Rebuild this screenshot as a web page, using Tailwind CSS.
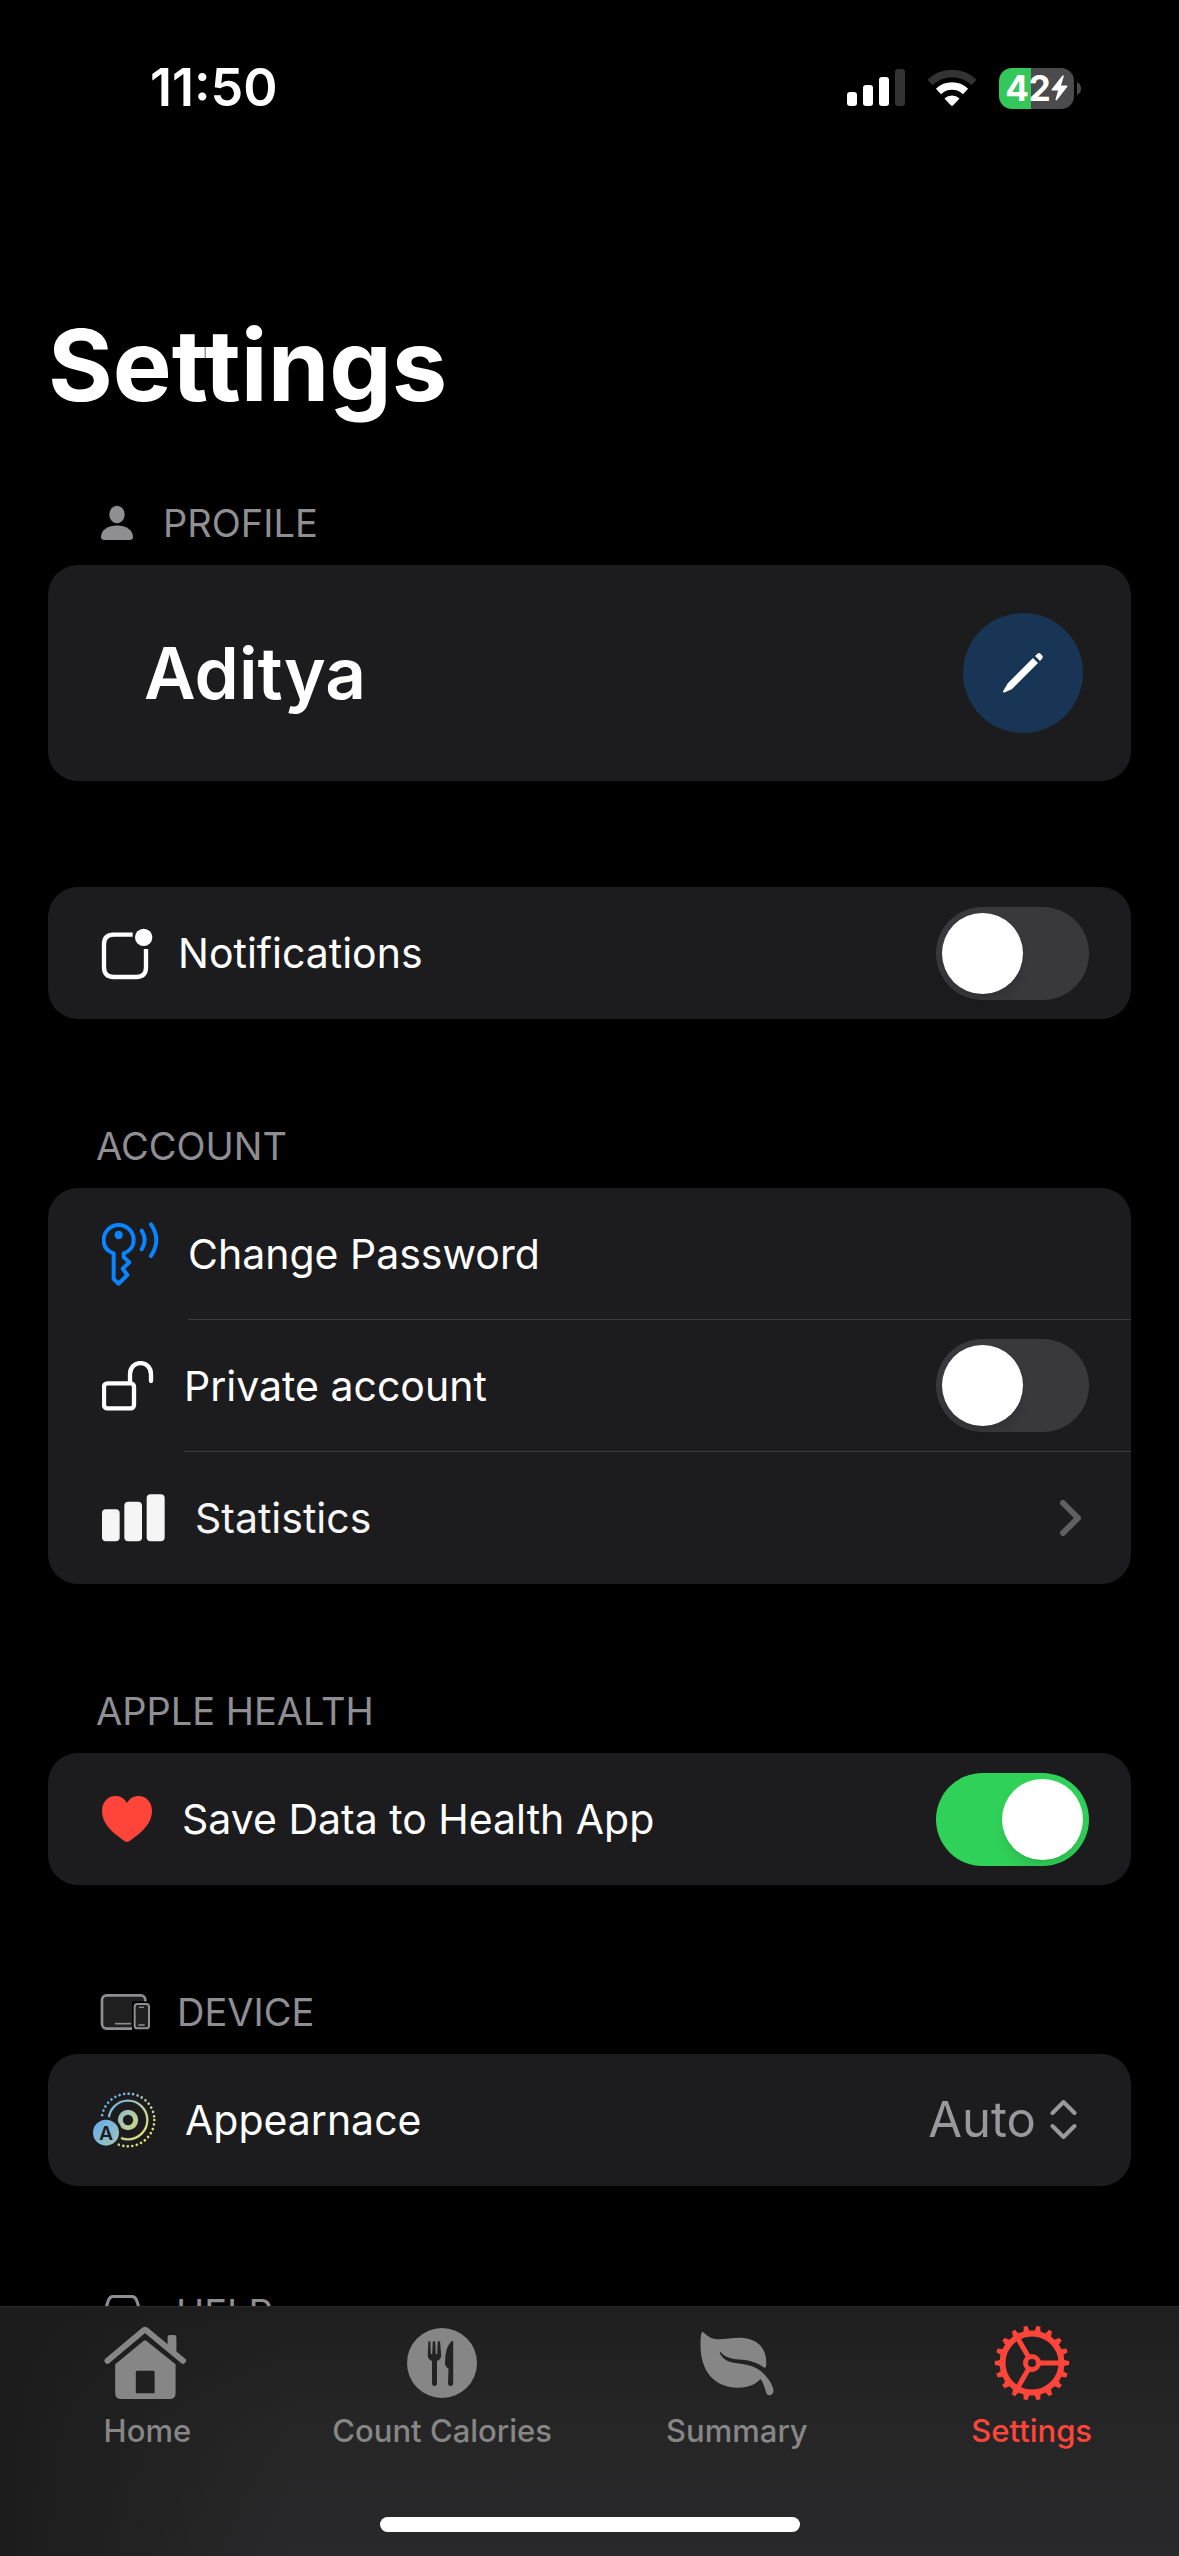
<!DOCTYPE html>
<html lang="en">
<head>
<meta charset="utf-8">
<meta name="viewport" content="width=device-width, initial-scale=1">
<title>Settings</title>
<script src="https://cdn.jsdelivr.net/npm/@tailwindcss/browser@4"></script>
</head>
<body class="min-h-screen bg-black font-[Inter,sans-serif] text-white">

<!-- Status bar -->
<header class="flex h-[176px] items-center justify-between pr-[98px] pl-[150px]">
  <time class="text-[52px] leading-[60px] font-semibold">11:50</time>
  <div class="flex items-center gap-[22px]">
    <svg class="h-[38px] w-[58px]" viewBox="0 0 58 38" fill="#fff" aria-label="Signal">
      <rect x="0" y="23" width="10" height="14" rx="3"/><rect x="16" y="16" width="10" height="21" rx="3"/><rect x="32" y="8" width="10" height="29" rx="3"/><rect x="48" y="0" width="10" height="37" rx="3" fill="#333"/>
    </svg>
    <svg class="h-[38px] w-[50px]" viewBox="0 0 50 38" aria-label="Wi-Fi">
      <path d="M3 13.500 A31.500 31.500 0 0 1 47 13.500" fill="none" stroke="#333" stroke-width="7.500"/>
      <path d="M11.500 22.500 A19.500 19.500 0 0 1 38.500 22.500" fill="none" stroke="#fff" stroke-width="7.500"/>
      <path d="M17.500 29.500 A11 11 0 0 1 32.500 29.500 L26.200 36.300 Q25 37.500 23.800 36.300Z" fill="#fff"/>
    </svg>
    <div class="flex items-center gap-[3px]" aria-label="Battery 42 percent, charging">
      <div class="flex h-[41px] w-[75px] items-center justify-center rounded-[13px] bg-linear-to-r from-[#34c759] from-43% to-[#4b4b4d] to-43%">
        <span class="text-[35px] leading-[40px] font-bold">42</span>
        <svg class="h-[26px] w-[17px]" viewBox="0 0 17 26" fill="#fff"><path d="M11.500 .5 L.7 14.200 Q0 15.500 1.500 15.500 H7 L4.500 24.500 Q4.800 26 6 25 L16.300 11.800 Q17 10.500 15.500 10.500 H10 L12.700 1.500 Q12.700 -.3 11.500 .5Z"/></svg>
      </div>
      <svg class="h-[13px] w-[4px]" viewBox="0 0 4 13" fill="#4b4b4d"><path d="M0 0 Q4 2 4 6.500 T0 13Z"/></svg>
    </div>
  </div>
</header>

<main class="px-12">
  <h1 class="mt-[129px] text-[99px] leading-[120px] font-bold">Settings</h1>

  <section class="mt-[74px]">
    <h2 class="flex items-center gap-[27px] pb-[18px] pl-12 text-[38px] leading-[48px] text-[#8e8e93]">
      <svg class="h-9 w-10" viewBox="0 0 40 36" fill="#8e8e93"><ellipse cx="21" cy="9.500" rx="7.700" ry="8.800"/><path d="M5 32 C5 25 12 20.500 21 20.500 S37 25 37 32 Q37 35 33.500 35 H8.500 Q5 35 5 32Z"/></svg>
      PROFILE
    </h2>
    <div class="flex h-[216px] items-center justify-between rounded-[30px] bg-[#1c1c1e] pr-12 pl-24">
      <p class="text-[71px] leading-[88px] font-semibold">Aditya</p>
      <button type="button" aria-label="Edit profile" class="flex size-[120px] items-center justify-center rounded-full bg-[#183555]">
        <svg class="size-[42px]" viewBox="0 0 42 42" fill="#fff"><path d="M31 6 L36 11 L10.500 36.500 Q9.500 37.500 8 38 L2.500 40.500 Q.5 41 1.200 39 L4.500 33.500 Q5 32 6 31Z"/><path d="M33 4 L35.500 1.700 Q37 .5 38.500 1.800 L40.200 3.500 Q41.500 5 40.200 6.500 L38 9Z"/></svg>
      </button>
    </div>
  </section>

  <section class="mt-[106px] rounded-[30px] bg-[#1c1c1e]">
    <div class="flex h-[132px] items-center gap-[26px] pr-[42px] pl-[54px]">
      <svg class="h-[66px] w-[50px] shrink-0 overflow-visible" viewBox="66 63 150 198" fill="none" stroke="#fff" stroke-width="13"><path d="M158 107 H101 Q72 107 72 136 V205 Q72 234 101 234 H169 Q198 234 198 205 V150" /><circle cx="191" cy="115" r="26" fill="#fff" stroke="none"/></svg>
      <label for="notifications" class="flex-1 text-[41px] leading-[50px]">Notifications</label>
      <input id="notifications" type="checkbox" role="switch" class="h-[93px] w-[153px] appearance-none rounded-full bg-[#39393d] p-[6px] before:block before:size-[81px] before:rounded-full before:bg-white before:shadow-lg checked:bg-[#30d158] checked:before:ml-[60px]">
    </div>
  </section>

  <section class="mt-[103px]">
    <h2 class="pb-[18px] pl-12 text-[38px] leading-[48px] text-[#8e8e93]">ACCOUNT</h2>
    <div class="rounded-[30px] bg-[#1c1c1e]">
      <div class="flex h-[132px] items-center gap-[26px] pl-[54px]">
        <svg class="h-[64px] w-[60px] shrink-0" viewBox="66 67 180 192" fill="none" stroke="#0a84ff" stroke-width="12" stroke-linecap="round" stroke-linejoin="round"><path d="M101 161 C82 155 71 140 71 121 A45 45 0 0 1 161 121 C161 140 149 155 131 161 V172 L148 188 L128 207 L142 226 L116 252 L101 238Z"/><circle cx="116" cy="106" r="12.500" fill="#0a84ff" stroke="none"/><path d="M185 93 Q203 121 185 149 M213 74 Q245 121 213 169"/></svg>
        <button type="button" class="h-full flex-1 border-b border-[#3a3a3c] text-left text-[41px] leading-[50px]">Change Password</button>
      </div>
      <div class="flex h-[132px] items-center gap-[26px] pl-[54px]">
        <svg class="h-[50px] w-[56px] shrink-0" viewBox="66 485 168 150" fill="none" stroke="#fff" stroke-width="13" stroke-linecap="round"><rect x="72" y="552" width="90" height="75" rx="10"/><path d="M150 550 V525 C150 480 213 480 213 525 V545"/></svg>
        <div class="flex h-full flex-1 items-center justify-between border-b border-[#3a3a3c] pr-[42px]">
          <label for="private" class="text-[41px] leading-[50px]">Private account</label>
          <input id="private" type="checkbox" role="switch" class="h-[93px] w-[153px] appearance-none rounded-full bg-[#39393d] p-[6px] before:block before:size-[81px] before:rounded-full before:bg-white before:shadow-lg checked:bg-[#30d158] checked:before:ml-[60px]">
        </div>
      </div>
      <a href="#statistics" class="flex h-[132px] items-center gap-[26px] pr-[50px] pl-[54px] text-[#f5f5f5]">
        <svg class="h-[48px] w-[67px] shrink-0" viewBox="66 884 201 144" fill="#f5f5f5"><rect x="66" y="930" width="53" height="96" rx="12"/><rect x="133" y="907" width="53" height="119" rx="12"/><rect x="200" y="885" width="54" height="141" rx="12"/></svg>
        <span class="flex-1 text-[41px] leading-[50px]">Statistics</span>
        <svg class="h-[36px] w-[21px]" viewBox="0 0 21 36" fill="none" stroke="#5f5f62" stroke-width="6" stroke-linecap="round" stroke-linejoin="round"><path d="M3 3 L18 18 L3 33"/></svg>
      </a>
    </div>
  </section>

  <section class="mt-[103px]">
    <h2 class="pb-[18px] pl-12 text-[38px] leading-[48px] text-[#8e8e93]">APPLE HEALTH</h2>
    <div class="flex h-[132px] items-center gap-[26px] rounded-[30px] bg-[#1c1c1e] pr-[42px] pl-[54px]">
      <svg class="h-[46px] w-[54px] shrink-0" viewBox="0 0 54 46" fill="#ff453a"><path d="M25 46 Q23.500 46 21 44 C8 35 0 26 0 15 C0 6 6 0 13.500 0 C18.500 0 22.500 2.500 25 7 C27.500 2.500 31.500 0 36.500 0 C44 0 50 6 50 15 C50 26 42 35 29 44 Q26.500 46 25 46Z"/></svg>
      <label for="health" class="flex-1 text-[41px] leading-[50px]">Save Data to Health App</label>
      <input id="health" type="checkbox" role="switch" checked class="h-[93px] w-[153px] appearance-none rounded-full bg-[#39393d] p-[6px] before:block before:size-[81px] before:rounded-full before:bg-white before:shadow-lg checked:bg-[#30d158] checked:before:ml-[60px]">
    </div>
  </section>

  <section class="mt-[103px]">
    <h2 class="flex items-center gap-[27px] pb-[18px] pl-12 text-[38px] leading-[48px] text-[#8e8e93]">
      <svg class="h-9 w-[54px]" viewBox="48 42 162 108" fill="#1f1f20" stroke="#8e8e93" stroke-width="6"><rect x="66" y="46" width="130" height="100" rx="14" stroke-width="8"/><path d="M105 131 H153" stroke-width="5"/><rect x="156" y="64" width="58" height="90" fill="#000" stroke="none"/><rect x="164" y="72" width="43" height="73" rx="8"/><path d="M177 82 H192 M175 135 H194" stroke-width="4"/></svg>
      DEVICE
    </h2>
    <div class="flex h-[132px] items-center gap-[26px] rounded-[30px] bg-[#1c1c1e] pr-[54px] pl-[54px]">
      <svg class="h-[58px] w-[57px] shrink-0 overflow-visible" viewBox="66 333 171 174" fill="none" stroke="url(#dial)">
        <defs>
          <linearGradient id="dial" gradientUnits="userSpaceOnUse" x1="70" y1="370" x2="200" y2="490"><stop offset="0" stop-color="#65a9ec"/><stop offset=".5" stop-color="#b0c9a8"/><stop offset="1" stop-color="#f2e55c"/></linearGradient>
          <linearGradient id="badge" gradientUnits="userSpaceOnUse" x1="45" y1="430" x2="110" y2="490"><stop offset="0" stop-color="#6aaeea"/><stop offset="1" stop-color="#9cc3b8"/></linearGradient>
          <mask id="cut" maskUnits="userSpaceOnUse" x="30" y="320" width="220" height="200"><rect x="30" y="320" width="220" height="200" fill="#fff"/><circle cx="78" cy="458" r="48" fill="#000"/></mask>
        </defs>
        <g mask="url(#cut)">
          <circle cx="144" cy="420" r="79" stroke-width="8" stroke-linecap="round" pathLength="360" stroke-dasharray="0.010 9.990"/>
          <circle cx="144" cy="420" r="58" stroke-width="7"/>
          <circle cx="144" cy="420" r="23" stroke-width="15"/>
        </g>
        <circle cx="78" cy="458" r="39" fill="url(#badge)" stroke="none"/>
        <text x="78" y="479" text-anchor="middle" font-size="58" font-weight="600" fill="#1c1c1e" stroke="none">A</text>
      </svg>
      <label for="appearance" class="flex-1 text-[41px] leading-[50px]">Appearnace</label>
      <div class="flex items-center gap-[14px]">
        <select id="appearance" class="appearance-none bg-transparent text-right text-[49px] leading-[60px] text-[#98989e]"><option>Auto</option><option>Dark</option></select>
        <svg class="h-[40px] w-[27px]" viewBox="0 0 27 40" fill="none" stroke="#98989e" stroke-width="4" stroke-linecap="round" stroke-linejoin="round"><path d="M2.500 13 L13.500 2 L24.500 13 M2.500 26 L13.500 37 L24.500 26"/></svg>
      </div>
    </div>
  </section>

  <section class="mt-[103px]">
    <h2 class="flex items-center gap-[27px] pl-12 text-[38px] leading-[48px] text-[#8e8e93]">
      <svg class="h-9 w-[53px]" viewBox="0 0 53 36" fill="none" stroke="#8e8e93" stroke-width="3" stroke-linejoin="round"><path d="M9 16 L12.500 5 Q14 1.500 17 1.500 H36 Q39 1.500 40.500 5 L44 16 V30 Q44 34 40 34 H13 Q9 34 9 30Z"/></svg>
      HELP
    </h2>
  </section>
</main>

<!-- Tab bar -->
<nav class="fixed inset-x-0 bottom-0 border-t border-[#2a2a2a] bg-linear-to-b from-[#1e1e1e] via-[#262627] to-[#29292b]">
  <div class="bg-linear-to-r from-[#1c1c1c] via-transparent via-25% to-transparent to-100% pb-6">
  <div class="grid grid-cols-4 pt-[18px] text-[31px] leading-[36px] font-medium text-[#868686]">
    <a href="#home" class="flex flex-col items-center gap-3">
      <svg class="h-[76px] w-[86px]" viewBox="0 0 86 76" fill="#868686"><path d="M3.500 35.700 L39.200 5.800 Q41 4.200 42.800 5.800 L79 35.700" fill="none" stroke="#868686" stroke-width="6" stroke-linecap="round"/><path d="M63.600 22 V12 Q63.600 10 65.600 10 H70.400 Q72.400 10 72.400 12 V29.500Z"/><path fill-rule="evenodd" d="M11.200 39.300 L39.800 15.800 Q41 14.800 42.200 15.800 L71.600 39.300 V68 Q71.600 74 65.600 74 H17.200 Q11.200 74 11.200 68Z M31.800 47.200 V68.300 H50.600 V47.200 Q50.600 45.700 49 45.700 H33.300 Q31.800 45.700 31.800 47.200Z"/></svg>
      Home
    </a>
    <a href="#count" class="flex flex-col items-center gap-3">
      <svg class="size-[76px]" viewBox="-3 -3 76 76"><circle cx="35" cy="35" r="35" fill="#868686"/><g fill="#232324"><path d="M21.300 14 Q22.300 12 23.300 14 L23.800 26 H25.200 L25.800 14 Q27 12 28.200 14 L28.800 26 H30.200 L30.700 14 Q31.900 12 33.100 14 L34.200 27 Q34.400 31.500 30 33 L30 55.500 Q29.800 58 27.500 58 Q25.200 58 25 55.500 L25 33 Q20.600 31.500 20.800 27Z"/><path d="M46.200 13.500 V55.500 Q46 58 43.600 58 Q41.200 58 41 55.500 L41.500 40.500 Q38 38.500 38 35 Q38 20 43.500 14.500 Q45.500 12.200 46.200 13.500Z"/></g></svg>
      Count Calories
    </a>
    <a href="#summary" class="flex flex-col items-center gap-3">
      <svg class="size-[76px]" viewBox="0 0 76 76" fill="#868686"><path d="M3.500 7 C5 6.500 9 14 18 14.200 C26 14.400 33 12.700 40 12.700 C57 12.700 68 22 67.300 39 C67 43 66 43.500 63.500 41.500 C56 36.500 48 35 40 34.500 C31 34 25 31.500 21.500 27 C20.500 27 20.500 28 21.500 29.500 C26 36.500 32 37.500 40 38.500 C50 39.800 58 42 64 48 C69 53 74 60 74.500 65 C74.500 69 72 70.300 70.500 70.300 C68.500 70.300 67.500 69 67 67 C65.500 62 64 57 61.400 54 C57 59 50 62.700 39 62.700 C16 62.700 1.500 47 1.500 20 C1.500 14 2 7 3.500 7Z"/></svg>
      Summary
    </a>
    <a href="#settings" aria-current="page" class="flex flex-col items-center gap-3 text-[#ff453a]">
      <svg class="size-[76px]" viewBox="-38 -38 76 76" fill="none" stroke="#ff453a"><circle r="29.500" stroke-width="6"/><circle r="32.500" stroke-width="4" pathLength="360" stroke-dasharray="10 10" stroke-dashoffset="5"/><circle r="35.200" stroke-width="4" pathLength="360" stroke-dasharray="7 13" stroke-dashoffset="3.500"/><circle r="6.500" stroke-width="5"/><path d="M8 0 H28 M-4 -6.930 L-14 -24.250 M-4 6.930 L-14 24.250" stroke-width="5"/></svg>
      Settings
    </a>
  </div>
  <div class="mx-auto mt-[68px] h-[15px] w-[420px] rounded-full bg-white"></div>
  </div>
</nav>
</body>
</html>
